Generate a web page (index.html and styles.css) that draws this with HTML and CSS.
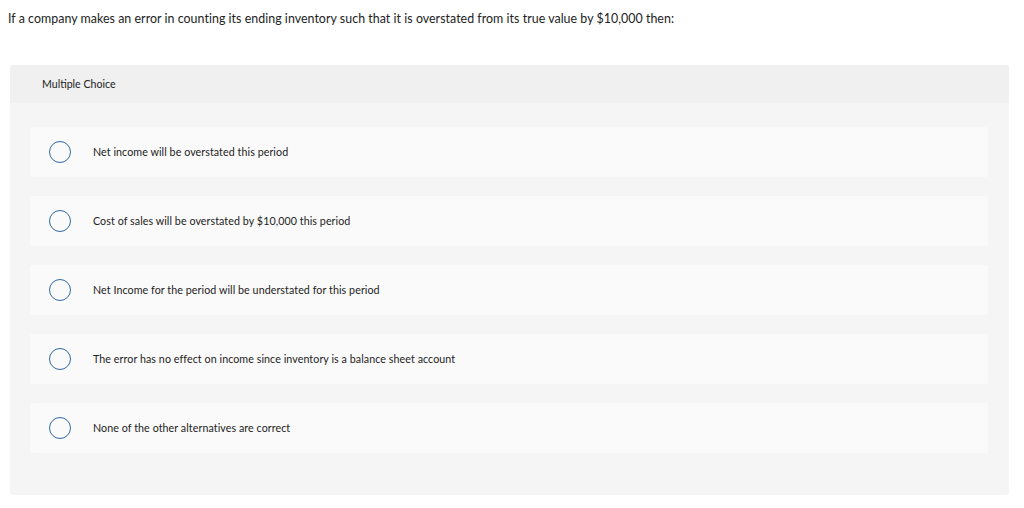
FILE: index.html
```html
<!DOCTYPE html>
<html>
<head>
<meta charset="utf-8">
<link rel="stylesheet" href="styles.css">
</head>
<body>
<p class="question">If a company makes an error in counting its ending inventory such that it is overstated from its true value by $10,000 then:</p>
<div class="panel">
  <div class="panel-head">Multiple Choice</div>
  <div class="panel-body">
    <div class="option"><span class="radio"></span><span class="label">Net income will be overstated this period</span></div>
    <div class="option"><span class="radio"></span><span class="label">Cost of sales will be overstated by $10,000 this period</span></div>
    <div class="option"><span class="radio"></span><span class="label">Net Income for the period will be understated for this period</span></div>
    <div class="option"><span class="radio"></span><span class="label">The error has no effect on income since inventory is a balance sheet account</span></div>
    <div class="option"><span class="radio"></span><span class="label">None of the other alternatives are correct</span></div>
  </div>
</div>
</body>
</html>
```
FILE: styles.css
```css
html, body {
  margin: 0;
  padding: 0;
  background: #ffffff;
}
body {
  font-family: Lato, "Liberation Sans", sans-serif;
  color: #333333;
  padding: 0 15px 0 10px;
}
.question {
  margin: 0 0 0 -2px;
  padding-top: 11px;
  font-size: 12.4px;
  letter-spacing: 0.04px;
  line-height: 16px;
  color: #222222;
  height: 64.5px;
  box-sizing: border-box;
}
.panel {
  background: #f5f5f5;
  border-radius: 3px;
  overflow: hidden;
  height: 430px;
  box-sizing: border-box;
}
.panel-head {
  background: #f0f0f0;
  height: 38px;
  display: flex;
  align-items: center;
  padding-left: 32px;
  font-size: 10.6px;
  color: #222222;
}
.panel-body {
  padding: 24px 21px 41px 20px;
  display: flex;
  flex-direction: column;
  gap: 19px;
}
.option {
  height: 50px;
  background: #fafafa;
  border-radius: 3px;
  display: flex;
  align-items: center;
  padding-left: 19px;
}
.radio {
  width: 20px;
  height: 20px;
  border: 1.3px solid #2f69a3;
  border-radius: 50%;
  box-sizing: content-box;
  flex: none;
}
.label {
  margin-left: 22px;
  font-size: 10.7px;
  letter-spacing: 0.07px;
  color: #222222;
}
```
